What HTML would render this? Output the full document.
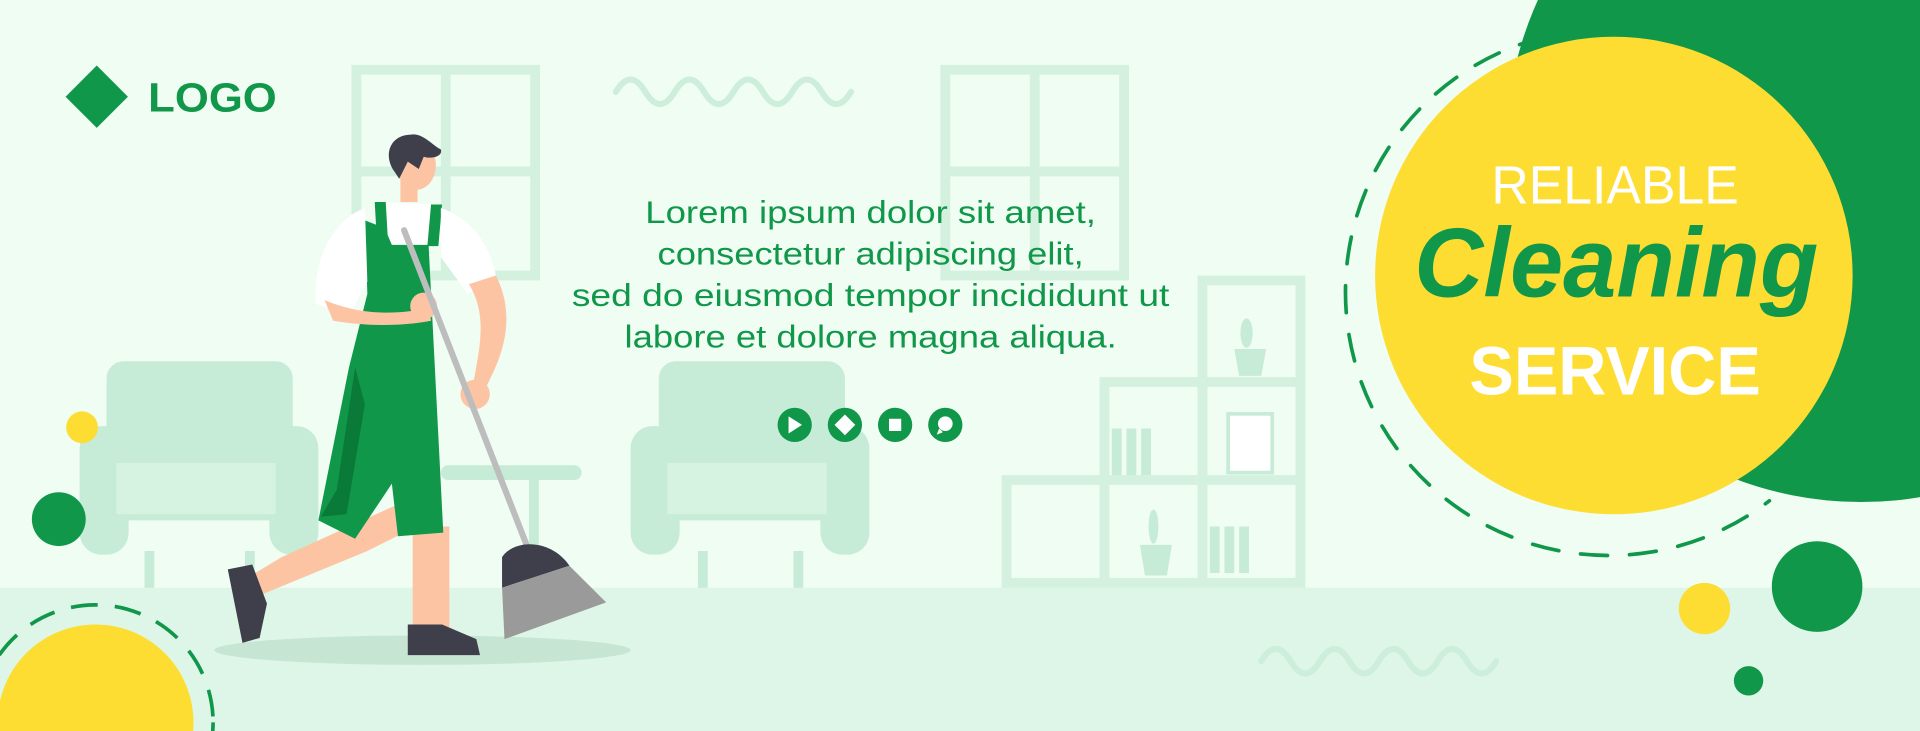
<!DOCTYPE html>
<html><head><meta charset="utf-8"><style>
html,body{margin:0;padding:0;background:#effdf3;overflow:hidden;width:1920px;height:731px}
svg{display:block}
text{font-family:"Liberation Sans",sans-serif}
</style></head><body>
<svg width="1920" height="731" viewBox="0 0 1568 597" xmlns="http://www.w3.org/2000/svg">
<rect width="1568" height="597" fill="#effdf3"/>
<rect y="480" width="1568" height="117" fill="#ddf6e7"/>
<path d="M503 75 q12-20 24 0 t24 0 t24 0 t24 0 t24 0 t24 0 t24 0 t24 0" fill="none" stroke="#cdeedb" stroke-width="5" stroke-linecap="round"/>
<path d="M1030 540 q12-20 24 0 t24 0 t24 0 t24 0 t24 0 t24 0 t24 0 t24 0" fill="none" stroke="#cdeedb" stroke-width="5" stroke-linecap="round"/>
<g fill="none" stroke="#d3f1de" stroke-width="8">
<rect x="291" y="57" width="146" height="168"/><line x1="364" y1="57" x2="364" y2="225"/><line x1="291" y1="140" x2="437" y2="140"/>
<rect x="772" y="57" width="146" height="168"/><line x1="845" y1="57" x2="845" y2="225"/><line x1="772" y1="140" x2="918" y2="140"/>
</g>
<g fill="#c6ebd6">
<rect x="87" y="295" width="152" height="130" rx="14"/>
<rect x="65" y="348" width="40" height="105" rx="18"/><rect x="220" y="348" width="40" height="105" rx="18"/>
<rect x="95" y="378" width="130" height="42" fill="#d6f3e2"/>
<rect x="118" y="450" width="8" height="30"/><rect x="200" y="450" width="8" height="30"/>
<rect x="538" y="295" width="152" height="130" rx="14"/>
<rect x="515" y="348" width="40" height="105" rx="18"/><rect x="670" y="348" width="40" height="105" rx="18"/>
<rect x="545" y="378" width="130" height="42" fill="#d6f3e2"/>
<rect x="570" y="450" width="8" height="30"/><rect x="648" y="450" width="8" height="30"/>
<rect x="360" y="380" width="115" height="12" rx="6"/><rect x="432" y="390" width="8" height="90"/>
</g>
<g fill="none" stroke="#d3f1de" stroke-width="8">
<rect x="822" y="392" width="80" height="84"/>
<rect x="902" y="312" width="80" height="164"/><line x1="902" y1="392" x2="982" y2="392"/>
<rect x="982" y="229" width="80" height="247"/><line x1="982" y1="312" x2="1062" y2="312"/><line x1="982" y1="392" x2="1062" y2="392"/>
</g>
<rect x="1003" y="338" width="36" height="48" fill="#fff" stroke="#c6ebd6" stroke-width="3"/>
<g fill="#c6ebd6"><rect x="908" y="350" width="8" height="38"/><rect x="920" y="350" width="8" height="38"/><rect x="932" y="350" width="8" height="38"/>
<rect x="988" y="430" width="8" height="38"/><rect x="1000" y="430" width="8" height="38"/><rect x="1012" y="430" width="8" height="38"/>
<path d="M1008 285h26l-4 22h-18z"/><path d="M931 445h26l-4 25h-18z"/><ellipse cx="1018" cy="272" rx="5" ry="12"/><ellipse cx="942" cy="430" rx="4" ry="14"/></g>
<circle cx="67" cy="349" r="13" fill="#fedd33"/>
<circle cx="48" cy="424" r="22" fill="#11974a"/>
<circle cx="78" cy="590" r="80" fill="#fedd33"/>
<circle cx="78" cy="590" r="96" fill="none" stroke="#11974a" stroke-width="3" stroke-dasharray="22 14"/>
<circle cx="1484" cy="479" r="37" fill="#11974a"/>
<circle cx="1392" cy="497" r="21" fill="#fedd33"/>
<circle cx="1428" cy="556" r="12" fill="#11974a"/>
<circle cx="1520" cy="120" r="290" fill="#11974a"/>
<path d="M1262 30 A215 215 0 1 0 1445 409" fill="none" stroke="#11974a" stroke-width="3" stroke-dasharray="22 18" stroke-linecap="round"/>
<circle cx="1318" cy="225" r="195" fill="#fedd33"/>
<text x="1218" y="166" textLength="202" lengthAdjust="spacingAndGlyphs" fill="#fff" font-size="44">RELIABLE</text>
<text x="1155" y="242" textLength="330" lengthAdjust="spacingAndGlyphs" fill="#11974a" font-size="80" font-weight="bold" font-style="italic" font-family="Liberation Serif,serif">Cleaning</text>
<text x="1200" y="322" textLength="238" lengthAdjust="spacingAndGlyphs" fill="#fff" font-size="56" font-weight="bold">SERVICE</text>
<rect x="61" y="61" width="36" height="36" fill="#11974a" transform="rotate(45 79 79)"/>
<text x="121" y="91" textLength="105" lengthAdjust="spacingAndGlyphs" fill="#11974a" font-size="33" font-weight="bold">LOGO</text>
<g fill="#11974a" font-size="26">
<text x="527" y="182" textLength="368" lengthAdjust="spacingAndGlyphs">Lorem ipsum dolor sit amet,</text>
<text x="537" y="216" textLength="348" lengthAdjust="spacingAndGlyphs">consectetur adipiscing elit,</text>
<text x="467" y="250" textLength="488" lengthAdjust="spacingAndGlyphs">sed do eiusmod tempor incididunt ut</text>
<text x="510" y="284" textLength="402" lengthAdjust="spacingAndGlyphs">labore et dolore magna aliqua.</text>
</g>
<g fill="#11974a"><circle cx="649" cy="347" r="14"/><circle cx="690" cy="347" r="14"/><circle cx="731" cy="347" r="14"/><circle cx="772" cy="347" r="14"/></g>
<g fill="#fff"><path d="M644 340l11 7-11 7z"/><rect x="684" y="341" width="12" height="12" transform="rotate(45 690 347)"/><rect x="726" y="342" width="10" height="10"/><circle cx="772" cy="346" r="6"/><path d="M767 350l-2 5 5-2z"/></g>
<ellipse cx="345" cy="531" rx="170" ry="12" fill="#c6e5d2"/>
<path d="M340 405 L230 455 L205 470 L215 485 L300 450 L360 420z" fill="#fdc4a4"/>
<path d="M186 465l20-4 12 32-6 28-14 4z" fill="#3e3f4a"/>
<rect x="337" y="430" width="30" height="85" fill="#fdc4a4"/>
<path d="M333 510h28l28 12 3 13h-59z" fill="#3e3f4a"/>
<path d="M298 180 L350 200 L362 435 L325 438 L320 395 L290 440 L260 425 L285 300 L300 240z" fill="#11974a"/>
<path d="M290 300 L275 400 L262 422 L283 420 L298 330z" fill="#0a7a38"/>
<path d="M305 165 L360 167 L360 200 L320 200z" fill="#fff"/>
<path d="M306 165h9l2 35h-9z M352 167h9l-3 34h-9z" fill="#11974a"/>
<path d="M298 170 C270 180 255 215 258 248 L285 258 L300 230z" fill="#fff"/>
<path d="M360 170 C385 178 400 200 405 225 L382 240 L360 210z" fill="#fff"/>
<path d="M265 245 C300 260 330 255 350 252 L352 262 C320 268 290 265 272 262z" fill="#fdc4a4"/>
<circle cx="346" cy="250" r="11" fill="#fdc4a4"/>
<path d="M383 232 L405 225 C425 265 405 300 395 320 L385 322 C390 290 400 260 383 232z" fill="#fdc4a4"/>
<circle cx="388" cy="322" r="12" fill="#fdc4a4"/>
<rect x="327" y="140" width="14" height="25" fill="#fdc4a4"/>
<ellipse cx="340" cy="135" rx="16" ry="20" fill="#fdc4a4"/>
<path d="M322 140 C312 125 320 110 335 110 C345 108 352 118 360 122 C362 128 352 130 346 128 L342 138 L333 132 L326 146z" fill="#3e3f4a"/>
<line x1="330" y1="188" x2="430" y2="445" stroke="#bdbdbd" stroke-width="5" stroke-linecap="round"/>
<path d="M410 455 C420 440 450 440 465 462 L410 480z" fill="#3e3f4a"/>
<path d="M410 480 L465 462 L495 492 L412 522z" fill="#9a9a9a"/>
</svg>
</body></html>
